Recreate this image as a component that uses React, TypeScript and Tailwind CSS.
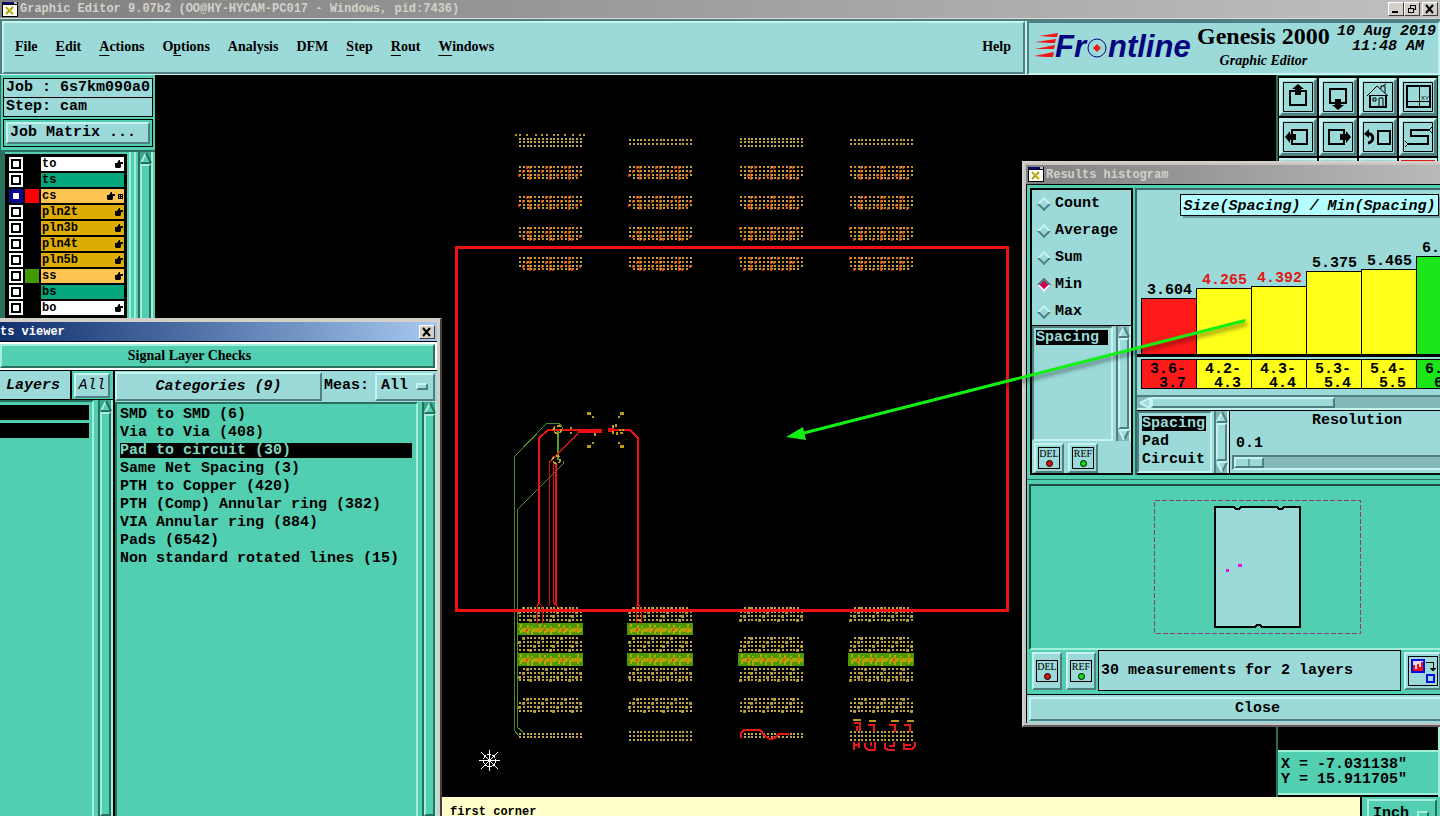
import { FC, PropsWithChildren, ReactNode, useState } from "react";

const mono = "font-['Liberation_Mono',monospace]";
const serif = "font-['Liberation_Serif',serif]";

const raisedTeal =
  "border-2 border-t-[#c6f2f2] border-l-[#c6f2f2] border-b-[#4f7f80] border-r-[#4f7f80] bg-[#9cdada]";
const sunkenTeal =
  "border-2 border-t-[#4f7f80] border-l-[#4f7f80] border-b-[#c6f2f2] border-r-[#c6f2f2] bg-[#9cdada]";
const raisedGreen =
  "border-2 border-t-[#a4efdb] border-l-[#a4efdb] border-b-[#28705c] border-r-[#28705c] bg-[#52ceb0]";

const menus = [
  { label: "File", key: 0 },
  { label: "Edit", key: 0 },
  { label: "Actions", key: 0 },
  { label: "Options", key: 1 },
  { label: "Analysis", key: -1 },
  { label: "DFM", key: -1 },
  { label: "Step", key: 0 },
  { label: "Rout", key: 0 },
  { label: "Windows", key: 0 },
];

const layers = [
  { name: "to", color: "bg-white", hand: true },
  { name: "ts", color: "bg-[#04a67c]" },
  { name: "cs", color: "bg-[#fdc44f]", swatch: "bg-[#ff0000]", hand: true, grid: true },
  { name: "pln2t", color: "bg-[#dcac04]", hand: true },
  { name: "pln3b", color: "bg-[#dcac04]", hand: true },
  { name: "pln4t", color: "bg-[#dcac04]", hand: true },
  { name: "pln5b", color: "bg-[#dcac04]", hand: true },
  { name: "ss", color: "bg-[#fdc44f]", swatch: "bg-[#449a04]", hand: true },
  { name: "bs", color: "bg-[#04a67c]" },
  { name: "bo", color: "bg-white", hand: true },
];

const categories = [
  "SMD to SMD (6)",
  "Via to Via (408)",
  "Pad to circuit (30)",
  "Same Net Spacing (3)",
  "PTH to Copper (420)",
  "PTH (Comp) Annular ring (382)",
  "VIA Annular ring (884)",
  "Pads (6542)",
  "Non standard rotated lines (15)",
];

const bars = [
  { value: "3.604", from: "3.6-", to: "3.7", height: 56, color: "bg-[#ff1a1a]" },
  { value: "4.265", from: "4.2-", to: "4.3", height: 66, color: "bg-[#ffff1a]", hot: true },
  { value: "4.392", from: "4.3-", to: "4.4", height: 68, color: "bg-[#ffff1a]", hot: true },
  { value: "5.375", from: "5.3-", to: "5.4", height: 83, color: "bg-[#ffff1a]" },
  { value: "5.465", from: "5.4-", to: "5.5", height: 85, color: "bg-[#ffff1a]" },
  { value: "6.", from: "6.", to: "6", height: 98, color: "bg-[#1ae61a]" },
];

const TitleIcon = () => (
  <svg viewBox="0 0 16 15" className="h-[15px] w-4 shrink-0">
    <rect width="16" height="15" fill="#000" />
    <rect x="1" y="3" width="14" height="11" fill="#fff" />
    <rect x="1" y="0" width="10" height="2" fill="#0a0a80" />
    <rect x="12" y="0" width="3" height="2" fill="#c0c0c0" />
    <path d="M4 5l7 7M11 5l-7 7" stroke="#a8a010" strokeWidth="2" />
    <path d="M5 5l7 7" stroke="#e8e020" />
  </svg>
);

const WinButton: FC<{ label: string; children: ReactNode }> = ({ label, children }) => (
  <button
    aria-label={label}
    className="flex h-[14px] w-4 items-center justify-center border border-t-white border-l-white border-r-[#404040] border-b-[#404040] bg-[#d4d0c8]"
  >
    <svg viewBox="0 0 12 10" className="h-[10px] w-3" fill="none" stroke="#000" shapeRendering="crispEdges">
      {children}
    </svg>
  </button>
);

const CloseGlyph = () => <path d="M2 1l7 8M9 1L2 9" strokeWidth="2" shapeRendering="auto" />;

const ArrowGlyph: FC<{ dir: "up" | "down" | "left"; green?: boolean }> = ({ dir, green }) => {
  const light = green ? "#a4efdb" : "#c6f2f2";
  const dark = green ? "#28705c" : "#4f7f80";
  const turn = { up: "rotate-0", down: "rotate-180", left: "-rotate-90" }[dir];
  return (
    <svg viewBox="0 0 12 12" className={`size-3 shrink-0 ${turn}`}>
      <path d="M6 1L11 11H1z" fill={green ? "#52ceb0" : "#9cdada"} />
      <path d="M6 1L1 11" stroke={dir === "down" ? dark : light} strokeWidth="2" fill="none" />
      <path d="M6 1L11 11" stroke={dir === "up" ? dark : light} strokeWidth="2" fill="none" />
      <path d="M1 11H11" stroke={dir === "up" ? dark : light} strokeWidth="2" fill="none" />
    </svg>
  );
};

const ScrollBar: FC<{ green?: boolean; end?: boolean }> = ({ green, end }) => (
  <div
    className={`flex w-[15px] shrink-0 flex-col items-stretch border-x-2 ${
      green ? "border-l-[#28705c] border-r-[#a4efdb] bg-[#3aa78d]" : "border-l-[#4f7f80] border-r-[#c6f2f2] bg-[#84b8b8]"
    }`}
  >
    <ArrowGlyph dir="up" green={green} />
    <div className={`w-[11px] flex-1 ${green ? raisedGreen : raisedTeal}`} />
    {end && <ArrowGlyph dir="down" green={green} />}
  </div>
);

const Handle: FC<{ green?: boolean }> = ({ green }) => (
  <span className={`h-[7px] w-3 shrink-0 ${green ? raisedGreen : raisedTeal}`} />
);

const MarkButton: FC<{ label: string; color: string; tall?: boolean }> = ({ label, color, tall }) => (
  <button
    className={`flex w-[30px] shrink-0 items-center justify-center ${tall ? "h-[38px]" : "h-[30px]"} ${raisedTeal}`}
  >
    <span className="flex h-[22px] w-[22px] flex-col items-center border border-black">
      <span className={`${serif} text-[10px] leading-[12px] font-normal`}>{label}</span>
      <span className={`size-[7px] rounded-full border border-black ${color}`} />
    </span>
  </button>
);

const Hand = () => (
  <svg viewBox="0 0 8 8" className="h-2 w-2 shrink-0">
    <path d="M0 3h2l2-3h1v2h3v2H6v3L5 8H1L0 7z" fill="#000" />
  </svg>
);

const Logo = () => (
  <svg viewBox="0 0 162 40" className="h-10 w-[162px] shrink-0">
    <g fill="#f01818">
      <path d="M6 9l19-3-1 4H19z" />
      <path d="M2 15l21-3-1 4H16z" />
      <path d="M2 22l20-4-1 4H16z" />
      <path d="M1 29l20-4-1 5H12z" />
    </g>
    <g fill="#05057f" fontFamily="'Liberation Sans', sans-serif" fontSize="31" fontWeight="bold" fontStyle="italic">
      <text x="22" y="30">Fr</text>
      <text x="75" y="30">ntline</text>
    </g>
    <circle cx="64" cy="21" r="9" fill="none" stroke="#05057f" strokeWidth="1" />
    <path d="M64 17l4 4-4 4-4-4z" fill="#f01818" />
  </svg>
);

const tools: { name: string; art: ReactNode }[] = [
  {
    name: "Pan up",
    art: (
      <>
        <path d="M7 9h16v14H7z" fill="none" strokeWidth="2" />
        <path d="M12 13V7h-3l6-5 6 5h-3v6z" fill="#000" stroke="none" />
      </>
    ),
  },
  {
    name: "Pan down",
    art: (
      <>
        <path d="M7 7h16v14H7z" fill="none" strokeWidth="2" />
        <path d="M12 17v6h-3l6 5 6-5h-3v-6z" fill="#000" stroke="none" />
      </>
    ),
  },
  {
    name: "Home",
    art: (
      <>
        <path d="M4 14L14 4l11 10M7 13.500h16M18 7V4h4v7M20 4l3-2M16 25v-9h4v9" fill="none" />
        <path d="M10 16h3v3h-3z" fill="none" />
        <path d="M7 13v12h16V13" fill="none" strokeWidth="2" />
      </>
    ),
  },
  {
    name: "Zoom to point",
    art: (
      <>
        <path d="M4 4h23v21H4z" fill="none" strokeWidth="2" />
        <path d="M16.500 4v21M4 19.500h23" fill="none" />
        <text x="18" y="18" fontSize="6" stroke="none" fontFamily="'Liberation Sans', sans-serif">
          XY
        </text>
      </>
    ),
  },
  {
    name: "Pan left",
    art: (
      <>
        <path d="M9 8h15v14H9z" fill="none" strokeWidth="2" />
        <path d="M13 12H7v-3l-5 6 5 6v-3h6z" fill="#000" stroke="none" />
      </>
    ),
  },
  {
    name: "Pan right",
    art: (
      <>
        <path d="M6 8h15v14H6z" fill="none" strokeWidth="2" />
        <path d="M17 12h6v-3l5 6-5 6v-3h-6z" fill="#000" stroke="none" />
      </>
    ),
  },
  {
    name: "Previous view",
    art: (
      <>
        <path d="M15 9h12v13H15z" fill="none" strokeWidth="2" />
        <path d="M4 12c7-2 8 8 1 9" fill="none" strokeWidth="3" />
        <path d="M1 12l5-5v9z" fill="#000" stroke="none" />
      </>
    ),
  },
  {
    name: "Route view",
    art: (
      <>
        <path d="M27 8H8v6h17v8H4" fill="none" strokeWidth="2" />
        <path d="M26 8l3-3M26 8l3 3M5 22l-3-3M5 22l-3 3" fill="none" />
      </>
    ),
  },
];

const ToolButton: FC<{ name: string; children: ReactNode }> = ({ name, children }) => (
  <button
    aria-label={name}
    className="flex size-[38px] items-center justify-center border-[3px] border-t-[#c6f2f2] border-l-[#c6f2f2] border-b-[#4f7f80] border-r-[#4f7f80] bg-[#9cdada]"
  >
    <svg viewBox="0 0 30 30" className="size-[30px]" stroke="#000">
      <path d="M0.500 0.500h29v29h-29z" fill="none" />
      {children}
    </svg>
  </button>
);

// pad rows: y of the row, and whether it is inset by one pad on both sides
type Row = [number, boolean];
const cols = [519, 629, 740, 850];
const step = (i: number) => Math.round(i * 3.82);

const upperRows: Row[] = [166, 196, 227, 257].flatMap((y): Row[] => [
  [y, false],
  [y + 4, false],
  [y + 8, false],
  [y + 11, true],
]);
const lowerRows: Row[] = [
  [607, true], [611, false], [615, false], [619, false],
  [637, true], [641, false], [645, false], [649, false],
  [668, true], [672, false], [676, false], [679, false],
  [698, true], [702, false], [706, false], [710, false],
];
const topRows = [[138, 141, 145], [139, 143], [138, 141, 145], [139, 143]];
const endRows = [[733, 736], [731, 735, 739], [733, 736], [731, 735, 739]];

const PadRow: FC<{ x: number; y: number; inset?: boolean; kind: "plain" | "red" | "green" }> = ({ x, y, inset, kind }) => (
  <>
    {Array.from({ length: 17 }, (_, i) => {
      if (inset && (i === 0 || i === 16)) return null;
      const mark = (i * 7 + y * 3 + x) % 5;
      const px = x + step(i);
      return (
        <g key={i}>
          {kind === "red" && (i % 5 === 3 || mark === 1) && (
            <rect x={px - 1} y={y} width={2} height={3} fill="#c03808" />
          )}
          {kind === "green" && mark === 2 && <rect x={px - 1} y={y} width={3} height={3} fill="#a08a10" />}
          <rect
            x={px}
            y={y}
            width={2}
            height={2}
            fill={kind === "red" && mark < 2 ? "#d88020" : mark === 3 ? "#c8a81c" : "#bca458"}
          />
        </g>
      );
    })}
  </>
);

const CopperBand: FC<{ x: number; y: number; h: number }> = ({ x, y, h }) => (
  <g>
    <rect x={x} y={y} width={66} height={h} fill="#4a9a08" />
    <path d={`M${x + 2} ${y + 7}h63`} stroke="#b0a400" strokeWidth="4" />
    {[4, 11, 15, 23, 28, 34, 42, 47, 53, 61].map((dx, i) => (
      <g key={dx}>
        <path d={`M${x + dx} ${y + 1 + (i % 3)}v${h - 3}`} stroke="#b8a804" strokeWidth="2" />
        <path d={`M${x + dx - 3} ${y + 10}l4-6`} stroke={i % 2 ? "#c87808" : "#4a9a08"} />
        {i % 3 === 1 && <rect x={x + dx - 2} y={y + 6} width={2} height={2} fill="#d84808" />}
      </g>
    ))}
  </g>
);

const Board = () => (
  <svg
    viewBox="155 75 1121 722"
    preserveAspectRatio="xMinYMin slice"
    className="h-full w-full"
    shapeRendering="crispEdges"
    fill="none"
  >
    {[515, 519, 526, 535, 541, 546, 553, 557, 564, 572, 579, 583].map((x) => (
      <rect key={x} x={x} y={134} width={2} height={2} fill="#b49a30" />
    ))}
    {cols.map((x, c) => (
      <g key={x}>
        {topRows[c].map((y) => (
          <PadRow key={y} x={x} y={y} kind="plain" />
        ))}
        {upperRows.map(([y, inset]) => (
          <PadRow key={y} x={x} y={y} inset={inset} kind="red" />
        ))}
        {lowerRows.map(([y, inset]) => (
          <PadRow key={y} x={x} y={y} inset={inset} kind="green" />
        ))}
        {endRows[c].map((y) => (
          <PadRow key={y} x={x} y={y} kind="plain" />
        ))}
        {c < 2 && <CopperBand x={x - 2} y={623} h={12} />}
        <CopperBand x={x - 2} y={653} h={13} />
      </g>
    ))}

    {/* traces */}
    <g stroke="#4a8a2a">
      <path d="M519 736l-5-6V457l33-34h12l3 4v3" />
      <path d="M524 733l-7-6V510l46-46v-3" />
    </g>
    <path d="M558 430v30" stroke="#5a9a2a" strokeWidth="2" />
    <g stroke="#f01010">
      <path d="M539 604V438l9-8h12" strokeWidth="2" />
      <path d="M558 430h20M609 430h21l8 8v168" strokeWidth="2" />
      <path d="M578 430.500h24" strokeWidth="4" />
      <path d="M608 430h6" strokeWidth="4" />
      <path d="M556 463v142" strokeWidth="2" />
      <path d="M549.500 606V462l31-31M553.500 603V462M553.500 603l7 6" stroke="#d01414" />
      <path d="M537 624v-18l2-3 3 3v18M636 624v-18l2-2 3 4v16" />
    </g>
    <g stroke="#c0a020" strokeWidth="2" strokeDasharray="4 2">
      <circle cx="557.500" cy="429.500" r="4" />
      <circle cx="556.500" cy="459.500" r="4" />
    </g>
    <g fill="#bd9c1c">
      <path d="M587 412h4v3h-4zM592 416h2v2h-2zM620 412h4v3h-4zM618 416h2v2h-2z" />
      <path d="M587 445h4v3h-4zM592 442h2v2h-2zM620 445h4v3h-4zM618 442h2v2h-2z" />
      <path d="M570 427h2v2h-2zM570 432h2v2h-2zM612 425h2v3h-2zM615 424h2v3h-2zM612 431h2v3h-2zM616 432h2v3h-2zM619 429h2v2h-2zM622 429h2v2h-2zM620 432h3v2h-3zM594 433h2v3h-2z" />
    </g>
    <g stroke="#e81818" strokeWidth="2">
      <path d="M741 738v-5l3-3h16l5 6 5 3 5-1 4-4h10" />
      <path d="M854 723h6v8M857 726v5M868 725h6v7M889 725h6v7M904 725h6v7" />
      <path d="M854 742v8M859 742v6M854 745h4M865 743v4l3 3h7v-8M871 742v4M885 743v5l3 2h7M894 742v5M889 746h6M904 743v6h8l3-3v-4M905 745h6" />
    </g>
    <path d="M853 720h8M869 721h7M891 721h8M907 721h7" stroke="#c09a20" strokeWidth="2" />

    <rect x="456.500" y="247.500" width="551" height="363" stroke="#f01212" strokeWidth="3" />
    <g stroke="#fff">
      <path d="M489.500 750v21M479 760.500h21" />
      <path d="M481 752l17 17M498 752l-17 17" />
      <circle cx="489.500" cy="760.500" r="6" strokeDasharray="4 1" />
    </g>
  </svg>
);

const LayerPanel = () => {
  const [shown, setShown] = useState<string[]>([]);
  const toggle = (name: string) =>
    setShown(shown.includes(name) ? shown.filter((n) => n !== name) : [...shown, name]);

  return (
    <aside className="flex w-[155px] shrink-0 flex-col border-l border-[#28705c] bg-[#52ceb0] pt-[3px]">
      <div className={`mx-[2px] ${mono} text-[15px] font-bold`}>
        <p className="h-5 border border-black bg-[#9cdada] px-[2px] leading-[18px] whitespace-pre">Job : 6s7km090a0</p>
        <p className="-mt-px h-5 border border-black bg-[#9cdada] px-[2px] leading-[18px]">Step: cam</p>
        <div className="mt-[2px] border border-black p-[2px]">
          <button className={`block h-[22px] w-full px-[2px] text-left leading-[18px] ${raisedTeal}`}>
            Job Matrix ...
          </button>
        </div>
      </div>
      <div className="mt-[3px] flex min-h-0 flex-1 border-t-2 border-[#28705c]">
        <div className="flex-1 border-l-4 border-[#28705c] pt-[2px]">
          <ul className="border border-black bg-black pt-[2px] pl-[3px]">
            {layers.map((layer) => (
              <li key={layer.name} className="flex h-4 items-start gap-[2px]">
                <input
                  type="checkbox"
                  aria-label={layer.name}
                  checked={shown.includes(layer.name)}
                  onChange={() => toggle(layer.name)}
                  className={`size-[14px] shrink-0 appearance-none border-2 bg-white outline-2 -outline-offset-4 checked:bg-[#9cdada] ${
                    layer.grid ? "border-[#0a0a90] outline-[#0a0a90]" : "border-white outline-black"
                  }`}
                />
                <span className={`h-[14px] w-[14px] shrink-0 ${layer.swatch ?? "bg-black"}`} />
                <span className={`mr-[2px] flex h-[14px] flex-1 items-center gap-[3px] px-[1px] ${layer.color}`}>
                  <span className={`flex-1 ${mono} text-xs leading-[14px] font-bold`}>{layer.name}</span>
                  {layer.hand && <Hand />}
                  {layer.grid && (
                    <svg viewBox="0 0 5 5" className="size-[5px]" shapeRendering="crispEdges">
                      <path d="M0.500 0.500h4v4h-4zM2.500 0v5M0 2.500h5" fill="none" stroke="#000" />
                    </svg>
                  )}
                </span>
              </li>
            ))}
          </ul>
        </div>
        <div className="mx-[2px] w-[7px] border-x-2 border-[#a4efdb]" />
        <ScrollBar green />
        <div className="w-[2px]" />
      </div>
    </aside>
  );
};

const TitleBar: FC<PropsWithChildren<{ title: string; className: string }>> = ({ title, className, children }) => (
  <div className={`flex h-[19px] shrink-0 items-center ${className}`}>
    <span className={`flex-1 ${mono} text-xs font-bold whitespace-nowrap`}>{title}</span>
    {children}
  </div>
);

const ResultsViewer = () => {
  const [selected, setSelected] = useState("Pad to circuit (30)");

  return (
    <section className="absolute top-[318px] bottom-0 left-0 flex w-[442px] flex-col border-t border-r-2 border-t-[#d4d0c8] border-r-[#404040] bg-[#d4d0c8] pt-[3px] pr-[3px]">
      <TitleBar title="ts viewer" className="bg-linear-to-r from-[#12306e] to-[#a6c8f0] pr-[2px] text-white">
        <WinButton label="Close viewer">
          <CloseGlyph />
        </WinButton>
      </TitleBar>
      <div className="flex min-h-0 flex-1 flex-col border-t border-black bg-black">
        <div className="border-y-2 border-r-2 border-white">
          <button
            className={`block h-6 w-full pr-[56px] text-center ${serif} text-sm leading-5 font-bold ${raisedGreen}`}
          >
            Signal Layer Checks
          </button>
        </div>
        <div className="mt-px flex min-h-0 flex-1">
          <div className="flex w-[113px] flex-col bg-[#52ceb0]">
            <div className={`flex h-[29px] border-b border-black ${mono} text-[15px] italic`}>
              <span className="w-[72px] border-r-2 border-black bg-[#9cdada] pl-[6px] leading-[30px] font-bold">
                Layers
              </span>
              <button className={`m-[2px] h-[25px] w-9 text-center leading-[22px] ${raisedTeal}`}>All</button>
            </div>
            <div className="flex min-h-0 flex-1">
              <div className="flex flex-1 flex-col gap-[3px] border-t-2 border-r-2 border-t-[#28705c] border-r-[#a4efdb] pt-[3px] pr-[3px]">
                <div className="h-[15px] bg-black" />
                <div className="h-[15px] bg-black" />
              </div>
              <div className="w-1" />
              <ScrollBar green />
            </div>
          </div>
          <div className="w-[2px]" />
          <div className="flex flex-1 flex-col bg-[#52ceb0]">
            <div className={`flex h-[31px] items-center bg-[#9cdada] ${mono} text-[15px] font-bold`}>
              <button className={`h-[29px] w-[207px] shrink-0 text-center leading-[25px] italic ${raisedTeal}`}>
                Categories (9)
              </button>
              <label htmlFor="meas" className="flex-1 pl-[2px]">
                Meas:
              </label>
              <span className={`mr-[2px] flex h-[28px] w-[60px] items-center pr-[5px] ${raisedTeal}`}>
                <select id="meas" className="w-[40px] flex-1 appearance-none bg-transparent pl-1 outline-none">
                  <option>All</option>
                </select>
                <Handle />
              </span>
            </div>
            <div className="flex min-h-0 flex-1">
              <ul
                className={`flex-1 border-t-2 border-r-2 border-l-2 border-t-[#28705c] border-l-[#28705c] border-r-[#a4efdb] pt-[3px] pr-1 pl-[3px] ${mono} text-[15px] leading-[15px] font-bold`}
              >
                {categories.map((name) => (
                  <li key={name} className="h-[18px]">
                    <button
                      onClick={() => setSelected(name)}
                      className={`block h-[15px] w-full text-left whitespace-nowrap ${
                        name === selected ? "bg-black text-[#7fd8c0]" : ""
                      }`}
                    >
                      {name}
                    </button>
                  </li>
                ))}
              </ul>
              <div className="w-1" />
              <ScrollBar green />
            </div>
          </div>
        </div>
      </div>
    </section>
  );
};

const Histogram = () => {
  const [measure, setMeasure] = useState("Min");

  return (
    <section
      className={`absolute top-[161px] left-[1022px] flex w-[466px] flex-col border-2 border-t-[#d4d0c8] border-l-[#d4d0c8] border-b-[#606060] border-r-[#606060] bg-[#c8c4c4] p-[2px] pr-0 ${mono} text-[15px] font-bold`}
    >
      <TitleBar
        title="Results histogram"
        className="gap-[2px] bg-linear-to-r from-[#828282] to-[#c0c0c0] pl-[2px] text-[#d4d0c8]"
      >
        <span className="order-first">
          <TitleIcon />
        </span>
      </TitleBar>
      <div className="border-t border-l border-black bg-[#52ceb0]">
        <div className="flex gap-[2px] border-b border-[#28705c] pt-[3px] pr-1 pb-1 pl-[3px]">
          <div className="flex w-[103px] flex-col border-2 border-black bg-[#9cdada]">
            <fieldset className="flex flex-col border-b border-black">
              {["Count", "Average", "Sum", "Min", "Max"].map((name) => (
                <label key={name} className="flex h-[27px] items-center gap-[6px] pt-px pl-[7px]">
                  <input
                    type="radio"
                    name="measure"
                    checked={measure === name}
                    onChange={() => setMeasure(name)}
                    className="size-[10px] rotate-45 appearance-none border-2 border-t-[#c6f2f2] border-l-[#c6f2f2] border-b-[#4f7f80] border-r-[#4f7f80] checked:border-t-[#4f7f80] checked:border-l-[#4f7f80] checked:border-b-[#e6ffff] checked:border-r-[#e6ffff] checked:bg-[#d00450]"
                  />
                  {name}
                </label>
              ))}
            </fieldset>
            <div className="flex h-[115px]">
              <div className={`flex-1 pt-[2px] pl-[2px] ${sunkenTeal}`}>
                <p className="h-[15px] w-[72px] bg-black leading-[15px] text-[#9cdada]">Spacing</p>
              </div>
              <div className="w-[3px]" />
              <ScrollBar end />
            </div>
            <div className="flex gap-1 p-[2px] pb-0">
              <MarkButton label="DEL" color="bg-[#e01010]" />
              <MarkButton label="REF" color="bg-[#10e010]" />
            </div>
          </div>

          <div className="flex min-w-0 flex-1 flex-col border-t-2 border-l-2 border-[#3c6666] bg-[#9cdada]">
            <div className="flex justify-center pt-1">
              <h2 className="h-[22px] border border-black bg-[#b4ffff] px-[2px] leading-[23px] whitespace-nowrap italic shadow-[3px_2px_0_#6f9c9c]">
                Size(Spacing) / Min(Spacing)
              </h2>
            </div>
            <div className="flex flex-1 items-end border-b-[3px] border-black pl-1">
              {bars.map((bar) => (
                <div key={bar.value} className="w-[55px] shrink-0">
                  <p className={`pl-[6px] leading-[15px] ${bar.hot ? "text-[#e01818]" : ""}`}>{bar.value}</p>
                  <div className={`border-t border-l border-black ${bar.color}`} style={{ height: bar.height }} />
                </div>
              ))}
            </div>
            <div className="mt-[2px] flex pl-1 leading-[14px]">
              {bars.map((bar) => (
                <div
                  key={bar.from}
                  className={`h-[30px] w-[55px] shrink-0 border-y border-l border-black pt-[3px] pl-2 ${bar.color}`}
                >
                  <p>{bar.from}</p>
                  <p className="pl-[9px]">{bar.to}</p>
                </div>
              ))}
            </div>
            <div className="mt-[6px] flex h-[15px] items-center border-y-2 border-t-[#4f7f80] border-b-[#c6f2f2] bg-[#84b8b8] pl-[2px]">
              <ArrowGlyph dir="left" />
              <div className={`h-[11px] w-[184px] ${raisedTeal}`} />
            </div>
            <div className="flex h-[65px] border-t border-b-2 border-black">
              <ul className={`w-[75px] pt-[3px] pl-[3px] leading-[15px] ${sunkenTeal}`}>
                <li className="h-[18px]">
                  <span className="block h-[15px] w-16 bg-black text-[#9cdada]">Spacing</span>
                </li>
                <li className="h-[18px]">Pad</li>
                <li className="h-[18px]">Circuit</li>
              </ul>
              <div className="w-[2px]" />
              <ScrollBar end />
              <div className="flex min-w-0 flex-1 flex-col border-l border-black pt-[1px] pl-[2px]">
                <label htmlFor="resolution" className="text-center leading-[18px]">
                  Resolution
                </label>
                <span className="mt-[5px] pl-1 leading-[18px]">0.1</span>
                <input
                  id="resolution"
                  type="range"
                  defaultValue={0}
                  className="mt-[2px] h-[15px] w-full appearance-none border-2 border-t-[#4f7f80] border-l-[#4f7f80] border-b-[#c6f2f2] border-r-[#c6f2f2] bg-[#84b8b8] [&::-webkit-slider-thumb]:h-[11px] [&::-webkit-slider-thumb]:w-[30px] [&::-webkit-slider-thumb]:appearance-none [&::-webkit-slider-thumb]:border-2 [&::-webkit-slider-thumb]:border-t-[#c6f2f2] [&::-webkit-slider-thumb]:border-r-[#4f7f80] [&::-webkit-slider-thumb]:border-b-[#4f7f80] [&::-webkit-slider-thumb]:border-l-[#c6f2f2] [&::-webkit-slider-thumb]:bg-linear-to-r [&::-webkit-slider-thumb]:from-[#9cdada] [&::-webkit-slider-thumb]:from-45% [&::-webkit-slider-thumb]:via-[#4f7f80] [&::-webkit-slider-thumb]:via-50% [&::-webkit-slider-thumb]:to-[#9cdada] [&::-webkit-slider-thumb]:to-55%"
                />
              </div>
            </div>
          </div>
        </div>

        <div className="mt-1 ml-[2px] flex h-[166px] justify-center border-2 border-t-[#1c4c40] border-l-[#1c4c40] border-b-[#a4efdb] border-r-[#a4efdb] pt-[14px]">
          <svg viewBox="0 0 208 135" className="h-[135px] w-[208px]" fill="none" shapeRendering="crispEdges">
            <path d="M0.500 0.500h206v133H0.500z" stroke="#8c3a78" strokeDasharray="5 2" />
            <path
              d="M61 7h19l2 2h3l2-2h36l2 2h3l2-2h16v120h-38l-2-2h-3l-2 2H61z"
              fill="#9cdada"
              stroke="#000"
              strokeWidth="2"
            />
            <path d="M72 69h3v3h-3zM84 64h4v3h-4z" fill="#dc14dc" />
          </svg>
        </div>

        <div className="flex h-[45px] items-start gap-1 border-b border-black pl-[5px]">
          <span className="flex gap-1 pt-[2px]">
            <MarkButton label="DEL" color="bg-[#e01010]" tall />
            <MarkButton label="REF" color="bg-[#10e010]" tall />
          </span>
          <p className="-ml-[2px] h-[41px] w-[303px] shrink-0 border border-black bg-[#9cdada] px-[2px] leading-[39px]">
            30 measurements for 2 layers
          </p>
          <button
            aria-label="Copy histogram"
            className={`mt-[2px] -ml-px flex h-[38px] w-[37px] shrink-0 items-center justify-center ${raisedTeal}`}
          >
            <svg viewBox="0 0 30 30" className="size-[30px]" shapeRendering="crispEdges" fill="none">
              <path d="M0.500 0.500h29v29h-29z" stroke="#000" />
              <path d="M4 4h12v12H4z" fill="#e8d8e8" stroke="#0808e0" strokeWidth="2" />
              <path d="M5 15V9h2v4h2V8h2v3h2V6h2v9z" fill="#f01010" />
              <path d="M18 6.500h7v8M22 12h6M23 13h4M24 14.500h2" stroke="#000" />
              <path d="M19 19h7v7h-7z" stroke="#0808e0" strokeWidth="2" />
            </svg>
          </button>
        </div>
        <div className="bg-[#9cdada] p-[2px] pr-0">
          <button className={`block h-6 w-full leading-5 ${raisedTeal}`}>Close</button>
        </div>
      </div>
    </section>
  );
};

export default function App() {
  return (
    <div className="relative flex h-screen flex-col overflow-hidden bg-black text-black">
      <header className="shrink-0">
        <TitleBar
          title="Graphic Editor 9.07b2 (OO@HY-HYCAM-PC017 - Windows, pid:7436)"
          className="gap-[2px] border-b border-[#dcdcdc] bg-linear-to-r from-[#808080] to-[#c0c0c0] pr-[2px] pl-[2px] text-[#d4d0c8]"
        >
          <span className="order-first">
            <TitleIcon />
          </span>
          <span className="flex gap-[2px]">
            <span className="flex">
              <WinButton label="Minimize">
                <path d="M2 8h6" strokeWidth="2" />
              </WinButton>
              <WinButton label="Restore">
                <path d="M4.500 4V1.500h5v4H8M4 1h6" />
                <path d="M2.500 4.500h5v4h-5zM2 4h6" />
              </WinButton>
            </span>
            <WinButton label="Close">
              <CloseGlyph />
            </WinButton>
          </span>
        </TitleBar>
        <div className="flex h-14 border-t-2 border-[#4f7f80] bg-[#c6f2f2]">
          <nav
            className={`mr-[2px] mb-px flex flex-1 items-center border-l-2 border-l-[#4f7f80] ${serif} text-sm font-bold`}
          >
            <div className={`flex h-full flex-1 items-center gap-[18px] pr-3 pb-[2px] pl-[11px] ${raisedTeal}`}>
              {menus.map(({ label, key }) => (
                <button key={label}>
                  {key < 0 ? (
                    label
                  ) : (
                    <>
                      {label.slice(0, key)}
                      <span className="underline underline-offset-4">{label[key]}</span>
                      {label.slice(key + 1)}
                    </>
                  )}
                </button>
              ))}
              <button className="ml-auto">Help</button>
            </div>
          </nav>
          <div className={`flex w-[413px] shrink-0 pl-1 ${sunkenTeal}`}>
            <div className="pt-[4px]">
              <Logo />
            </div>
            <div className={`${serif} pl-[2px] text-center font-bold whitespace-nowrap`}>
              <h1 className="text-2xl leading-[26px]">Genesis 2000</h1>
              <p className="text-sm leading-6 italic">Graphic Editor</p>
            </div>
            <p className={`ml-auto pt-[1px] pr-[2px] text-right ${mono} text-[15px] leading-[15px] font-bold italic`}>
              10 Aug 2019
              <br />
              <span className="pr-[12px]">11:48 AM</span>
            </p>
          </div>
        </div>
      </header>

      <div className="flex min-h-0 flex-1">
        <LayerPanel />
        <main className="min-w-0 flex-1">
          <Board />
        </main>
        <aside className="flex w-[164px] shrink-0 flex-col border-t border-r-2 border-l-2 border-t-[#28705c] border-r-[#a4efdb] border-l-[#28705c]">
          <div className="grid grid-cols-4 gap-[2px] p-[1px] pt-[2px]">
            {tools.map((tool) => (
              <ToolButton key={tool.name} name={tool.name}>
                {tool.art}
              </ToolButton>
            ))}
            <div className="h-[38px] border-2 border-[#c6f2f2] bg-[#9cdada]" />
            <div className="h-[38px] border-2 border-[#c6f2f2] bg-[#9cdada]" />
            <div className="h-[38px] border-2 border-[#c6f2f2] bg-[#9cdada]" />
            <div className="h-[38px] border-2 border-[#c6f2f2] bg-[#e01818]" />
          </div>
          <div
            className={`mt-auto mb-[2px] h-[45px] border-y-2 border-t-[#a4efdb] border-b-[#a4efdb] bg-[#52ceb0] pt-[5px] pl-[3px] ${mono} text-[15px] leading-[15px] font-bold`}
          >
            <p>X = -7.031138"</p>
            <p>Y = 15.911705"</p>
          </div>
        </aside>
      </div>

      <footer className={`flex h-[19px] shrink-0 font-bold ${mono}`}>
        <p className="flex-1 bg-[#ffffcc] pt-2 pl-[450px] text-xs leading-[14px]">first corner</p>
        <div className="h-8 w-20 shrink-0 border-l-2 border-black bg-[#52ceb0] pt-[2px] pl-[5px]">
          <div className={`flex h-[30px] w-[70px] items-center pr-[6px] ${raisedGreen}`}>
            <select aria-label="Units" className="w-12 flex-1 appearance-none bg-transparent pl-1 text-[15px] outline-none">
              <option>Inch</option>
            </select>
            <Handle green />
          </div>
        </div>
      </footer>

      <ResultsViewer />
      <Histogram />

      {/* pointer from the histogram to the selected area */}
      <svg
        viewBox="0 0 1440 816"
        preserveAspectRatio="xMinYMin slice"
        className="pointer-events-none absolute inset-0 h-full w-full drop-shadow-[2px_3px_2px_rgba(0,0,0,0.5)]"
      >
        <path d="M1245 320.500L800 434" stroke="#12f012" strokeWidth="3" />
        <path d="M786 437l17-10 3 13z" fill="#12f012" />
      </svg>
    </div>
  );
}
